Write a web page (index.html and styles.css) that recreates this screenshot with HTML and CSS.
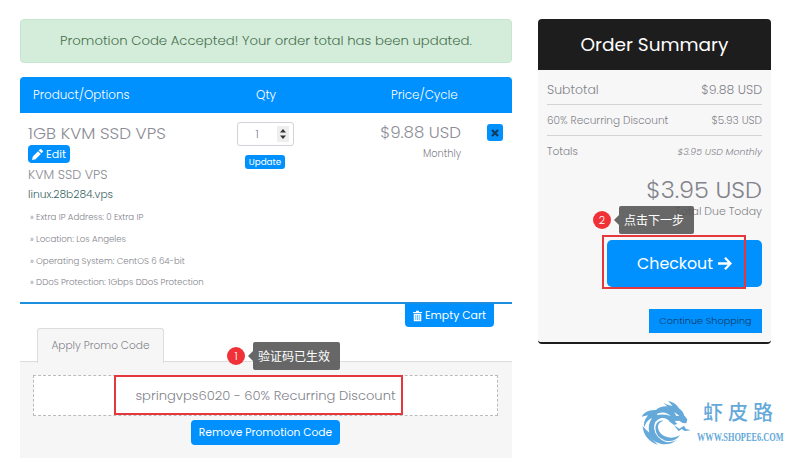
FILE: index.html
```html
<!DOCTYPE html>
<html lang="zh">
<head>
<meta charset="utf-8">
<title>Order Summary</title>
<link rel="stylesheet" href="styles.css">
</head>
<body>
<div class="page">
  <main class="cart">
    <div class="alert">Promotion Code Accepted! Your order total has been updated.</div>
    <div class="thead"><span>Product/Options</span><span>Qty</span><span>Price/Cycle</span></div>
    <section class="item">
      <div class="details">
        <h2>1GB KVM SSD VPS</h2>
        <button class="edit"><svg viewBox="0 0 16 16" width="11" height="11"><path fill="#fff" d="M0 16l1.2-5.2 7.6-7.6 4 4-7.6 7.6zM9.8 2.2l1.7-1.7q1-.9 2 0l2 2q.9 1 0 2l-1.7 1.7z"/></svg>Edit</button>
        <div class="group">KVM SSD VPS</div>
        <div class="domain">linux.28b284.vps</div>
        <ul>
          <li>» Extra IP Address: 0 Extra IP</li>
          <li>» Location: Los Angeles</li>
          <li>» Operating System: CentOS 6 64-bit</li>
          <li>» DDoS Protection: 1Gbps DDoS Protection</li>
        </ul>
      </div>
      <div class="qty">
        <div class="stepper"><span>1</span><svg viewBox="0 0 12 16" width="12" height="16"><path fill="#eee" d="M0 0h12v16H0z"/><path fill="#333" d="M3 6.5l3-3.5 3 3.5zM3 9.5l3 3.5 3-3.5z"/></svg></div>
        <button class="update">Update</button>
      </div>
      <div class="cost"><div class="amount">$9.88 USD</div><div class="cycle">Monthly</div></div>
      <button class="remove" aria-label="Remove"><svg viewBox="0 0 8 8" width="8" height="8"><path stroke="#123a5e" stroke-width="2.2" d="M1 1l6 6M7 1L1 7"/></svg></button>
    </section>
    <div class="actions">
      <div class="tab">Apply Promo Code</div>
      <button class="empty"><svg viewBox="0 0 12 14" width="9" height="12"><path fill="#fff" d="M0 1.5h4V0h4v1.5h4V3H0zM1 4h10v10H1z"/><path stroke="#0091ff" stroke-width=".8" d="M3.7 5.5v7M6 5.5v7M8.3 5.5v7"/></svg>Empty Cart</button>
    </div>
    <section class="promo">
      <div class="code">springvps6020 - 60% Recurring Discount<i class="mark mark-code"></i></div>
      <button class="removecode">Remove Promotion Code</button>
      <div class="note note-1"><b>1</b><span class="tip">验证码已生效</span></div>
    </section>
  </main>
  <aside class="summary">
    <h1>Order Summary</h1>
    <div class="sumbody">
      <div class="line sub"><span>Subtotal</span><span>$9.88 USD</span></div>
      <div class="line disc"><span>60% Recurring Discount</span><span>$5.93 USD</span></div>
      <div class="line tot"><span>Totals</span><em>$3.95 USD Monthly</em></div>
      <div class="due">$3.95 USD</div>
      <div class="today">Total Due Today</div>
      <div class="checkwrap">
        <button class="checkout">Checkout<svg viewBox="0 0 16 16" width="14" height="15"><path fill="none" stroke="#fff" stroke-width="2.6" d="M0 8h14M8 1.5L14.3 8 8 14.5"/></svg></button>
        <i class="mark mark-check"></i>
        <div class="note note-2"><b>2</b><span class="tip">点击下一步</span></div>
      </div>
      <button class="continue">Continue Shopping</button>
    </div>
    <div class="brand">
      <svg class="dragon" viewBox="17 23 150 141" width="50" height="47" fill="#65a9da"><path d="M19 76Q30 54 62 56Q74 44 96 45L84 35Q100 42 112 44L98 28Q122 34 130 50Q144 60 146 72L156 84L153 96L142 95L132 88L118 89L126 98L116 101L104 92Q94 78 78 80Q56 86 56 110Q60 140 92 152Q110 154 124 146Q106 162 78 158Q42 150 34 116L42 124Q36 100 50 80Q32 88 27 108Q22 92 38 72Z"/><path d="M84 88Q66 94 68 110Q72 132 98 138Q116 142 134 132Q118 154 90 148Q60 138 60 108Q64 86 84 88Z"/><path d="M22 104Q24 144 68 161Q44 140 36 120Z"/><path d="M116 101L132 112L146 103L151 112L166 117L148 119L139 113L130 120Z"/><path fill="#fff" d="M116 62l16 11-9 1zM68 66q22-8 38 8-20-7-42-3z"/></svg>
      <div class="words"><div class="cn">虾皮路</div><div class="url">WWW.SHOPEE6.COM</div></div>
    </div>
  </aside>
</div>
</body>
</html>
```
FILE: styles.css
```css
*{box-sizing:border-box}
body{margin:0;background:#fff;width:800px;height:462px;overflow:hidden;font-family:Poppins,Inter,"Noto Sans CJK SC",sans-serif;font-weight:300;color:#83838b}
button{font:inherit;border:0;padding:0;margin:0;background:#0091ff;color:#fff;display:flex;align-items:center;justify-content:center;border-radius:4px;white-space:nowrap}
h1,h2,ul{margin:0;padding:0;font-weight:300;list-style:none}
span,em{white-space:nowrap}
.page{display:flex;gap:26px;padding:19px 0 0 20px;align-items:flex-start}
.cart{width:492px}
.alert{height:44px;border:1px solid #c5e6ce;border-radius:4px;background:#d4edda;color:#48704f;display:flex;align-items:center;justify-content:center;font-size:13.25px}
.thead{margin-top:14px;height:36px;border-radius:4px 4px 0 0;background:#0091ff;color:#fff;display:grid;grid-template-columns:223px 135px 1fr;align-items:center;padding-left:13px;font-size:11.9px}
.item{height:191px;border-bottom:2px solid #1c8ede;display:grid;grid-template-columns:200px 74px 159px 16px;padding:9px 0 0 8px;align-items:start}
.item h2{height:23px;line-height:22px;font-size:16.8px;color:#8c8c94}
.edit{width:42px;height:18px;gap:3px;font-size:11px;font-weight:400}
.group{height:21px;line-height:23px;font-size:12.7px;color:#8c8c94}
.domain{height:22px;line-height:22px;font-size:10.7px;color:#35635d}
li{height:21.8px;line-height:23px;font-size:8.6px;padding-left:2px}
.qty{display:flex;flex-direction:column;align-items:center}
.stepper{width:57px;height:24px;border:1px solid #d0d3da;border-radius:3px;display:flex;align-items:center;justify-content:space-between;padding:0 4px 0 18px;font-size:11px}
.update{width:40px;height:14px;border-radius:3px;margin-top:9px;font-size:8.8px;font-weight:400}
.cost{text-align:right}
.amount{height:23px;line-height:22px;font-size:16.6px;color:#8c8c94}
.cycle{line-height:17px;font-size:9.8px}
.remove{width:16px;height:17px;margin:2px 0 0 26px;border-radius:3px}
.actions{height:57px;display:flex;justify-content:space-between;padding:0 18px 0 17px}
.tab{width:127px;height:35px;margin:24px 0 -2px;border:1px solid #dcdcdc;border-bottom:0;border-radius:3px 3px 0 0;background:#f6f6f6;display:flex;justify-content:center;align-items:center;font-size:10.6px;position:relative;z-index:1}
.empty{width:89px;height:23px;border-radius:0 0 4px 4px;gap:3px;font-size:10.9px;font-weight:400}
.promo{height:97px;border-top:1px solid #dcdcdc;background:#f6f6f6;padding:13px 14px 0 13px;position:relative;display:flex;flex-direction:column;align-items:center}
.code{width:465px;height:41px;border:1px dashed #bbb;background:#fff;display:flex;align-items:center;justify-content:center;font-size:13.1px;position:relative}
.removecode{width:149px;height:25px;margin-top:4px;font-size:10.7px;font-weight:400}
.mark{position:absolute;border:2px solid #e4383e}
.mark-code{left:80px;top:-1px;width:289px;height:40px}
.note{position:absolute;z-index:2;display:flex;align-items:center;gap:8px}
.note b{width:18px;height:18px;border-radius:50%;background:#f03238;color:#fff;font-size:11px;font-weight:300;line-height:18px;text-align:center}
.tip{height:28px;border-radius:2px;background:rgba(86,86,86,.9);color:#fff;font:400 12px/28px "Noto Sans CJK SC",sans-serif;padding:0 5px;position:relative}
.tip::before{content:"";position:absolute;left:-5px;top:9px;border:5px solid transparent;border-left:0;border-right-color:#666}
.note-1{left:207px;top:-20px}
.note-1 .tip{width:87px}
.summary{width:233px}
.summary h1{height:51px;background:#1d1d1d;border-radius:4px 4px 0 0;color:#fff;display:flex;align-items:center;justify-content:center;font-size:18.5px;font-weight:400}
.sumbody{height:274px;background:#f7f7f7;border-bottom:2px solid #1d1d1d;border-radius:0 0 4px 4px;padding:4px 9px 0;display:flex;flex-direction:column;align-items:flex-end}
.line{width:100%;height:31px;display:flex;justify-content:space-between;align-items:center;border-bottom:1px solid #d3d3d3;font-size:10.5px}
.disc{padding-top:1px}
.sub{font-size:12.5px;padding-top:1px}
.tot{border:0;height:32px}
.tot em{font-size:9.4px}
.due{height:35px;line-height:44px;font-size:24px}
.today{height:37px;line-height:18px;font-size:10.9px}
.checkwrap{position:relative}
.checkout{width:155px;height:47px;border-radius:5px;gap:5px;font-size:15.8px;font-weight:400}
.mark-check{left:-5px;top:-5px;width:144px;height:54px}
.note-2{left:-14px;top:-34px}
.note-2 .tip{width:75px}
.continue{width:113px;height:24px;border-radius:0;margin-top:22px;color:#12395f;font-size:9.7px;font-weight:300}
.brand{display:flex;gap:6px;margin:55px 0 0 103px;color:#65a9da}
.dragon{flex:none}
.cn{font:500 20px/26px "Noto Sans CJK SC",sans-serif;letter-spacing:5px;padding-left:6px;white-space:nowrap}
.url{font:700 13px/24px "Liberation Serif",serif;white-space:nowrap;width:max-content;transform:scaleX(.64);transform-origin:0 50%}
```
